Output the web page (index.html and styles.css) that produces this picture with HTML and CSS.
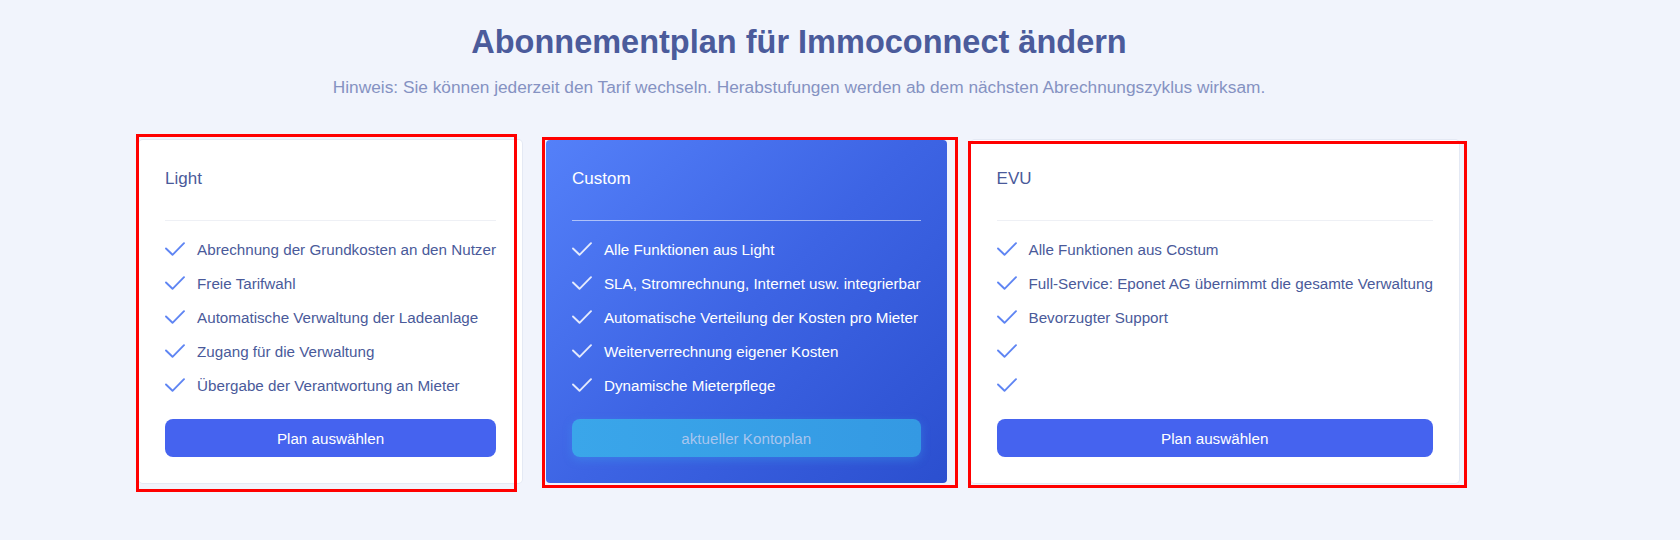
FILE: index.html
```html
<!DOCTYPE html>
<html>
<head>
  <meta charset="UTF-8">
  <title>Abonnementplan ändern</title>
  <link rel="stylesheet" href="styles.css">
</head>
<body>
  <div class="page">
    <h1>Abonnementplan für Immoconnect ändern</h1>
    <p class="hint">Hinweis: Sie können jederzeit den Tarif wechseln. Herabstufungen werden ab dem nächsten Abrechnungszyklus wirksam.</p>

    <div class="plans">
      <!-- Light -->
      <div class="plan">
        <span class="mark mark-light"></span>
        <h3 class="plan-name">Light</h3>
        <ul class="features">
          <li><svg class="check" viewBox="0 0 20 14"><path d="M1 6.5 L7.5 12.8 L19 1.2"/></svg>Abrechnung der Grundkosten an den Nutzer</li>
          <li><svg class="check" viewBox="0 0 20 14"><path d="M1 6.5 L7.5 12.8 L19 1.2"/></svg>Freie Tarifwahl</li>
          <li><svg class="check" viewBox="0 0 20 14"><path d="M1 6.5 L7.5 12.8 L19 1.2"/></svg>Automatische Verwaltung der Ladeanlage</li>
          <li><svg class="check" viewBox="0 0 20 14"><path d="M1 6.5 L7.5 12.8 L19 1.2"/></svg>Zugang für die Verwaltung</li>
          <li><svg class="check" viewBox="0 0 20 14"><path d="M1 6.5 L7.5 12.8 L19 1.2"/></svg>Übergabe der Verantwortung an Mieter</li>
        </ul>
        <button class="btn">Plan auswählen</button>
      </div>

      <!-- Custom (current) -->
      <div class="plan plan-current">
        <span class="mark mark-custom"></span>
        <h3 class="plan-name">Custom</h3>
        <ul class="features">
          <li><svg class="check" viewBox="0 0 20 14"><path d="M1 6.5 L7.5 12.8 L19 1.2"/></svg>Alle Funktionen aus Light</li>
          <li><svg class="check" viewBox="0 0 20 14"><path d="M1 6.5 L7.5 12.8 L19 1.2"/></svg>SLA, Stromrechnung, Internet usw. integrierbar</li>
          <li><svg class="check" viewBox="0 0 20 14"><path d="M1 6.5 L7.5 12.8 L19 1.2"/></svg>Automatische Verteilung der Kosten pro Mieter</li>
          <li><svg class="check" viewBox="0 0 20 14"><path d="M1 6.5 L7.5 12.8 L19 1.2"/></svg>Weiterverrechnung eigener Kosten</li>
          <li><svg class="check" viewBox="0 0 20 14"><path d="M1 6.5 L7.5 12.8 L19 1.2"/></svg>Dynamische Mieterpflege</li>
        </ul>
        <button class="btn btn-current">aktueller Kontoplan</button>
      </div>

      <!-- EVU -->
      <div class="plan">
        <span class="mark mark-evu"></span>
        <h3 class="plan-name">EVU</h3>
        <ul class="features">
          <li><svg class="check" viewBox="0 0 20 14"><path d="M1 6.5 L7.5 12.8 L19 1.2"/></svg>Alle Funktionen aus Costum</li>
          <li><svg class="check" viewBox="0 0 20 14"><path d="M1 6.5 L7.5 12.8 L19 1.2"/></svg>Full-Service: Eponet AG übernimmt die gesamte Verwaltung</li>
          <li><svg class="check" viewBox="0 0 20 14"><path d="M1 6.5 L7.5 12.8 L19 1.2"/></svg>Bevorzugter Support</li>
          <li><svg class="check" viewBox="0 0 20 14"><path d="M1 6.5 L7.5 12.8 L19 1.2"/></svg></li>
          <li><svg class="check" viewBox="0 0 20 14"><path d="M1 6.5 L7.5 12.8 L19 1.2"/></svg></li>
        </ul>
        <button class="btn">Plan auswählen</button>
      </div>
    </div>
  </div>
</body>
</html>
```

FILE: styles.css
```css
html,
body {
  min-height: 100%;
}
body {
  font-family: "Liberation Sans", Arial, Helvetica, sans-serif;
  margin: 0;
  background-color: #f1f4fc;
  color: #4a5a9a;
}
.page {
  width: 1598px;
  padding: 22px 0 56px;
  text-align: center;
}
h1 {
  margin: 0;
  font-size: 32.5px;
  line-height: 40px;
  font-weight: bold;
  color: #4b5b9b;
}
.hint {
  margin: 13px 0 0;
  font-size: 17.3px;
  line-height: 24px;
  color: #8592c2;
}
.plans {
  display: flex;
  justify-content: center;
  gap: 24px;
  margin-top: 41px;
  text-align: left;
}
.plan {
  position: relative;
  flex: 0 0 auto;
  display: flex;
  flex-direction: column;
  padding: 27px 26px 26px;
  background-color: #fff;
  border-radius: 4px;
  box-shadow: 0 0 0 1px rgba(40, 60, 120, 0.06);
}
.plan-name {
  margin: 0;
  font-size: 17px;
  line-height: 24px;
  font-weight: normal;
  color: #4a5a9a;
  padding-bottom: 29px;
  border-bottom: 1px solid #eef0f5;
}
.features {
  list-style: none;
  margin: 11px 0 0;
  padding: 0;
}
.features li {
  display: flex;
  align-items: center;
  height: 34px;
  font-size: 15.2px;
  white-space: nowrap;
  color: #4a5a9a;
}
.check {
  width: 20px;
  height: 14px;
  margin-right: 12px;
  flex: none;
  fill: none;
  stroke: #5f85f3;
  stroke-width: 1.9;
  stroke-linecap: round;
  stroke-linejoin: round;
}
.btn {
  margin-top: 17px;
  height: 38px;
  border: none;
  border-radius: 8px;
  background-color: #4563ef;
  color: #fff;
  font-family: inherit;
  font-size: 15.2px;
  cursor: pointer;
}

/* current plan */
.plan-current {
  background: linear-gradient(135deg, #5480f9 0%, #3d64e4 50%, #2b4fcf 100%);
  box-shadow: none;
}
.plan-current .plan-name,
.plan-current .features li {
  color: #fff;
}
.plan-current .plan-name {
  border-bottom-color: rgba(255, 255, 255, 0.55);
}
.plan-current .check {
  stroke: rgba(255, 255, 255, 0.85);
}
.btn-current {
  background: linear-gradient(90deg, #3aa6ea, #3499e3);
  color: rgba(190, 205, 240, 0.85);
  box-shadow: 0 3px 10px rgba(60, 170, 240, 0.35);
  cursor: default;
}

/* red review marks */
.mark {
  position: absolute;
  border: 3px solid #ff0000;
  pointer-events: none;
}
.mark-light {
  left: -3px;
  top: -6px;
  right: 5px;
  bottom: -9px;
}
.mark-custom {
  left: -4px;
  top: -3px;
  right: -11px;
  bottom: -5px;
}
.mark-evu {
  left: -3px;
  top: 1px;
  right: -8px;
  bottom: -5px;
}
```
